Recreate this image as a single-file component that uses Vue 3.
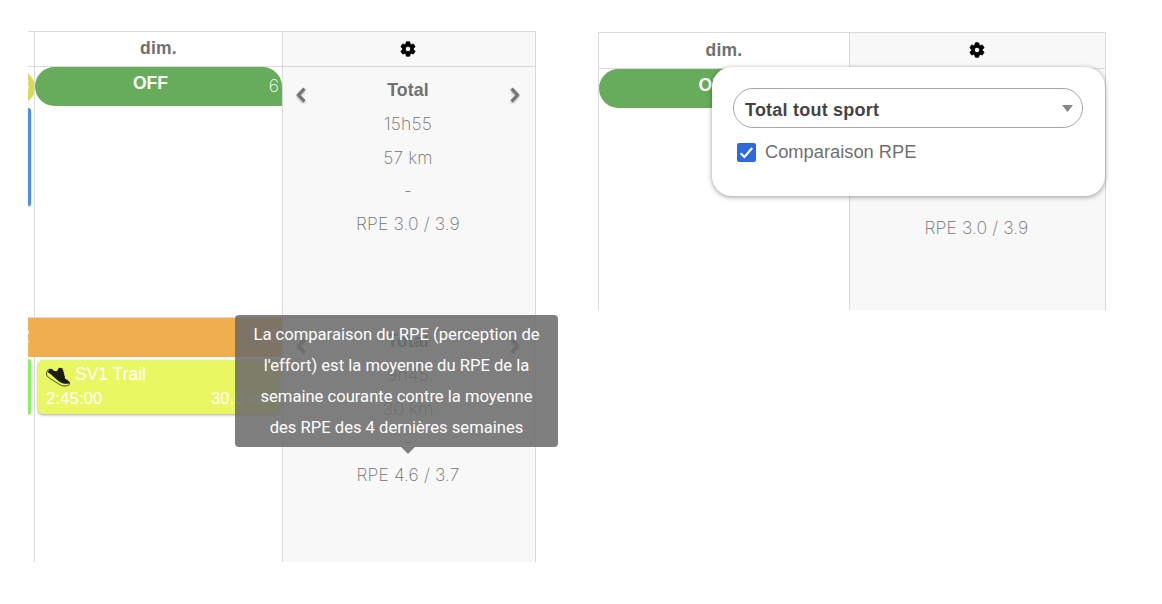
<template>
  <main class="page">
    <!-- Calendrier avec l'infobulle RPE -->
    <section class="calendar calendar-left">
      <div class="cell head sliver"></div>
      <div class="cell head">dim.</div>
      <div class="cell head summary">
        <svg class="gear" viewBox="0 0 24 24"><path :d="gearPath" /></svg>
      </div>

      <div class="cell sliver">
        <div class="pill-end">6</div>
        <div class="bar-end blue"></div>
      </div>
      <div class="cell day">
        <div class="off">
          OFF
          <span class="off-date">6</span>
        </div>
      </div>
      <div class="cell summary">
        <div v-for="(line, i) in weeks[0]" :key="i" class="stat" :class="{ title: i === 0 }">{{ line }}</div>
        <svg class="chevron prev" viewBox="0 0 12 18"><path d="M9.4 2.6 3.4 9l6 6.4" /></svg>
        <svg class="chevron next" viewBox="0 0 12 18"><path d="M2.6 2.6 8.6 9l-6 6.4" /></svg>
      </div>

      <div class="cell sliver second">
        <div class="bar-end green"></div>
      </div>
      <div class="cell day second">
        <div class="activity">
          <div class="activity-name">
            <svg class="shoe" viewBox="0 0 24 20">
              <path class="shoe-body" d="M3.200 1.800 6 2.100c1.200 1.500 2.600 2.300 4 2.200 1.500-.3 2.200-1.800 2.800-3.600l3.700.6.3 2 .9.300-.5 1.300.9.400-.4 1.300.8.500-.4 1.300.7.400.1 2.500c1.300 1.500 3.700 2.200 4.700 3.600.4.800.2 1.500-.6 1.700-2.400.6-6.400.2-9.200-1.600C9.800 12.600 6.500 8 1.800 5.300z" />
              <path class="shoe-sole" d="M2.400 2.500C.6 4.400.2 6.800.8 8.700c3.200 3.400 7.400 5.300 11.500 8 2.800 2 5.800 2.900 9.200 1.900 1.500-.4 2.100-1.200 2-2.600" />
            </svg>
            <span>SV1 Trail</span>
          </div>
          <div class="activity-data">
            <span>2:45:00</span>
            <span>30.0 km</span>
          </div>
        </div>
      </div>
      <div class="cell summary second">
        <div v-for="(line, i) in weeks[1]" :key="i" class="stat" :class="{ title: i === 0 }">{{ line }}</div>
        <svg class="chevron prev" viewBox="0 0 12 18"><path d="M9.4 2.6 3.4 9l6 6.4" /></svg>
        <svg class="chevron next" viewBox="0 0 12 18"><path d="M2.6 2.6 8.6 9l-6 6.4" /></svg>
      </div>

      <div class="period">
        <span>2</span>
        <span>6</span>
      </div>
      <div class="tooltip">
        <div v-for="line in tooltip" :key="line">{{ line }}</div>
      </div>
    </section>

    <!-- Calendrier avec le menu de configuration -->
    <section class="calendar calendar-right">
      <div class="cell head">dim.</div>
      <div class="cell head summary">
        <svg class="gear" viewBox="0 0 24 24"><path :d="gearPath" /></svg>
      </div>
      <div class="cell day">
        <div class="off">OFF</div>
      </div>
      <div class="cell summary">
        <div v-for="(line, i) in weeks[0]" :key="i" class="stat" :class="{ title: i === 0 }">{{ line }}</div>
      </div>

      <div class="menu">
        <button class="select">
          <span>Total tout sport</span>
          <svg class="arrow" viewBox="0 0 11 7"><path d="M0 0h11L5.500 7z" /></svg>
        </button>
        <div class="option" @click="compare = !compare">
          <span class="checkbox" :class="{ checked: compare }">
            <svg v-if="compare" viewBox="0 0 19 19"><path d="m3.600 10.200 3.800 3.800 7.800-9" /></svg>
          </span>
          <span>Comparaison RPE</span>
        </div>
      </div>
    </section>
  </main>
</template>

<script setup>
import { ref } from 'vue'

const compare = ref(true)

const weeks = [
  ['Total', '15h55', '57 km', '-', 'RPE 3.0 / 3.9'],
  ['Total', '9h45', '30 km', '-', 'RPE 4.6 / 3.7']
]

const tooltip = [
  'La comparaison du RPE (perception de',
  "l'effort) est la moyenne du RPE de la",
  'semaine courante contre la moyenne',
  'des RPE des 4 dernières semaines'
]

const gearPath =
  'M19.14 12.94c.04-.3.06-.61.06-.94 0-.32-.02-.64-.07-.94l2.03-1.58c.18-.14.23-.41.12-.61l-1.92-3.32c-.12-.22-.37-.29-.59-.22l-2.39.96c-.5-.38-1.03-.7-1.62-.94l-.36-2.54c-.04-.24-.24-.41-.48-.41h-3.84c-.24 0-.43.17-.47.41l-.36 2.54c-.59.24-1.13.57-1.62.94l-2.39-.96c-.22-.08-.47 0-.59.22L2.74 8.87c-.12.21-.08.47.12.61l2.03 1.58c-.05.3-.09.63-.09.94s.02.64.07.94l-2.03 1.58c-.18.14-.23.41-.12.61l1.92 3.32c.12.22.37.29.59.22l2.39-.96c.5.38 1.03.7 1.62.94l.36 2.54c.05.24.24.41.48.41h3.84c.24 0 .44-.17.47-.41l.36-2.54c.59-.24 1.13-.56 1.62-.94l2.39.96c.22.08.47 0 .59-.22l1.92-3.32c.12-.22.07-.47-.12-.61l-2.01-1.58zM12 15.6c-1.98 0-3.6-1.62-3.6-3.6s1.62-3.6 3.6-3.6 3.6 1.62 3.6 3.6-1.62 3.6-3.6 3.6z'
</script>

<style>
body {
  margin: 0;
  background: #fff;
}
</style>

<style scoped>
.page {
  box-sizing: border-box;
  width: 1162px;
  height: 604px;
  padding: 31px 0 0 28px;
  display: flex;
  align-items: flex-start;
  gap: 62px;
  font-family: "Liberation Sans", Arial, sans-serif;
  font-size: 17.5px;
  color: #707070;
}

.calendar {
  display: grid;
  position: relative;
  box-sizing: border-box;
  border-top: 1px solid #dadada;
}

.calendar-left {
  grid-template-columns: 7px 248px 253px;
  grid-template-rows: 35px 250px 245px;
}

.calendar-right {
  grid-template-columns: 251px 256px;
  grid-template-rows: 36px 241px;
  margin-top: 1px;
  border-left: 1px solid #dadada;
}

.cell {
  box-sizing: border-box;
  border-right: 1px solid #dadada;
  min-width: 0;
  position: relative;
}

.head {
  display: flex;
  align-items: center;
  justify-content: center;
  padding-bottom: 1px;
  border-bottom: 1px solid #dadada;
  font-weight: bold;
  letter-spacing: 0.2px;
}

.second {
  border-top: 1px solid #dadada;
}

.sliver {
  overflow: hidden;
}

.summary {
  background: #f8f8f8;
  padding-right: 2px;
  text-align: center;
}

.gear {
  width: 18px;
  height: 18px;
  fill: #000;
  stroke: #000;
  stroke-width: 1.2;
}

.off {
  box-sizing: border-box;
  height: 39px;
  padding: 6px 16px 0 0;
  border-radius: 20px 20px 0 20px;
  background: #67ac5b;
  color: #fff;
  font-weight: bold;
  line-height: 20px;
  text-align: center;
  position: relative;
}

.off-date {
  position: absolute;
  right: 3px;
  top: 9px;
  font-family: Inter, sans-serif;
  font-weight: 200;
}

.pill-end {
  height: 35px;
  margin: 3px -1px 0 -34px;
  padding-right: 5px;
  border-radius: 18px;
  background: #d3dc59;
  color: #fff;
  font-family: Inter, sans-serif;
  font-weight: 200;
  line-height: 30px;
  text-align: right;
}

.bar-end {
  width: 3px;
  border-radius: 0 5px 5px 0;
  box-shadow: 0 1px 2px rgba(0, 0, 0, 0.3);
}

.blue {
  height: 98px;
  margin-top: 3px;
  background: #4a8fe4;
}

.green {
  height: 55px;
  margin-top: 41px;
  background: #82f75c;
}

.stat {
  height: 33.3px;
  font-family: Inter, sans-serif;
  font-weight: 200;
  font-size: 17.5px;
  letter-spacing: 0.1px;
  line-height: 33.3px;
}

.stat.title {
  margin-top: 7px;
  font-family: "Liberation Sans", Arial, sans-serif;
  font-size: 17.7px;
  font-weight: bold;
}

.calendar-right .stat.title {
  margin-top: 9px;
}

.chevron {
  position: absolute;
  top: 19px;
  width: 12px;
  height: 18px;
  fill: none;
  stroke: #737373;
  stroke-width: 3;
  filter: drop-shadow(0 1px 1px rgba(0, 0, 0, 0.35));
}

.prev {
  left: 12px;
}

.next {
  right: 14px;
}

/* La période recouvre les colonnes de la semaine */
.period {
  position: absolute;
  top: 286px;
  left: 0;
  width: 254px;
  height: 39px;
  box-sizing: border-box;
  padding: 0 3px 0 0;
  display: flex;
  justify-content: space-between;
  overflow: hidden;
  background: #f1ae4f;
  color: #fff;
  font-family: Inter, sans-serif;
  font-weight: 200;
  line-height: 36px;
}

.period span:first-child {
  margin-left: -8px;
}

.activity {
  box-sizing: border-box;
  width: 242px;
  height: 54px;
  margin: 42px 0 0 3px;
  padding: 2px 8px 0;
  border-radius: 5px;
  background: #e9f763;
  box-shadow: 0 1px 3px rgba(0, 0, 0, 0.35);
  color: #fff;
}

.activity-name {
  display: flex;
  align-items: center;
  gap: 5px;
  height: 24px;
}

.shoe {
  width: 24px;
  height: 20px;
  margin-top: 5px;
}

.shoe-body {
  fill: #1c1c14;
}

.shoe-sole {
  fill: none;
  stroke: #1c1c14;
  stroke-width: 0.8;
}

.activity-data {
  display: flex;
  justify-content: space-between;
  height: 24px;
  padding-right: 1px;
  font-size: 16.5px;
  letter-spacing: 0.2px;
  line-height: 24px;
}

.tooltip {
  position: absolute;
  left: 207px;
  top: 283px;
  width: 323px;
  height: 132px;
  box-sizing: border-box;
  padding-top: 5px;
  border-radius: 4px;
  background: rgba(106, 106, 106, 0.86);
  color: #fff;
  font-family: Roboto, sans-serif;
  font-size: 16.6px;
  line-height: 30.9px;
  text-align: center;
  white-space: nowrap;
}

.tooltip::after {
  content: "";
  position: absolute;
  top: 100%;
  left: 166px;
  border: 7px solid transparent;
  border-top-color: #808080;
  border-bottom: 0;
}

.menu {
  position: absolute;
  left: 113px;
  top: 34px;
  width: 393px;
  height: 129px;
  box-sizing: border-box;
  padding: 21px;
  border-radius: 20px;
  background: #fff;
  box-shadow: 0 1px 5px rgba(0, 0, 0, 0.4);
}

.select {
  box-sizing: border-box;
  width: 350px;
  height: 40px;
  padding: 4px 9px 0 11px;
  display: flex;
  align-items: center;
  justify-content: space-between;
  border: 1px solid #a6a6a6;
  border-radius: 20px;
  background: #fff;
  color: #444;
  font: bold 18px "Liberation Sans", Arial, sans-serif;
  letter-spacing: 0.22px;
}

.arrow {
  width: 11px;
  height: 7px;
  margin-bottom: 4px;
  fill: #888;
}

.option {
  display: flex;
  align-items: center;
  gap: 9px;
  margin: 13px 0 0 4px;
  font-size: 18.3px;
}

.checkbox {
  box-sizing: border-box;
  width: 19px;
  height: 19px;
  border: 1px solid #767676;
  border-radius: 2px;
}

.checkbox.checked {
  border: none;
  background: #2f69de;
}

.checkbox svg {
  display: block;
  width: 19px;
  height: 19px;
  fill: none;
  stroke: #fff;
  stroke-width: 2.2;
}
</style>
